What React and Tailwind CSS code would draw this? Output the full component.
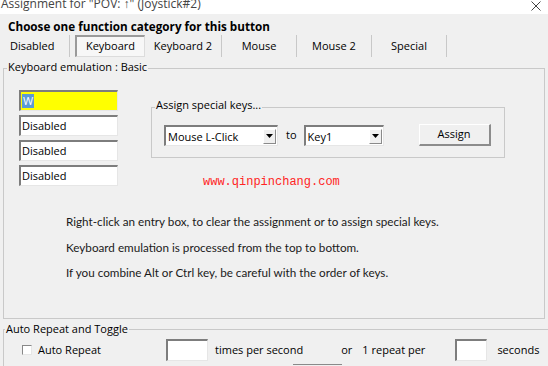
const sunken =
  "bg-white border-t-2 border-l-2 border-t-[#7d7d7d] border-l-[#7d7d7d] border-b border-r border-b-[#e6e6e6] border-r-[#e6e6e6]";

function Entry({ children, yellow }) {
  return (
    <div
      className={`w-[99px] h-[21px] flex items-center pl-[1px] ${sunken} ${
        yellow ? "!bg-[#ffff00]" : ""
      }`}
    >
      {children}
    </div>
  );
}

function Combo({ value, width }) {
  return (
    <div className={`${width} h-[21px] flex items-center ${sunken}`}>
      <span className="flex-1 pl-[2px] leading-none">{value}</span>
      <span className="w-[13px] h-[15px] mr-[1px] bg-[#f0f0f0] border-r border-b border-[#8a8a8a] border-t border-l border-t-white border-l-white flex items-center justify-center">
        <svg width="7" height="4" viewBox="0 0 7 4">
          <path d="M0 0h7L3.5 4z" fill="#000" />
        </svg>
      </span>
    </div>
  );
}

const tabs = ["Keyboard 2", "Mouse", "Mouse 2", "Special"];

export default function App() {
  return (
    <div className="w-[548px] h-[366px] overflow-hidden bg-[#f0f0f0] text-[11px] text-black font-['Open_Sans',sans-serif]">
      {/* title bar */}
      <div className="h-[14px] bg-white flex justify-between overflow-hidden">
        <span className="text-[12px] leading-[12px] text-[#444] -mt-[2px] pl-[1px]">
          Assignment for "POV: ↑" (Joystick#2)
        </span>
        <svg width="10" height="10" viewBox="0 0 10 10" className="mr-[7px] mt-[1px]">
          <path d="M0.5 0.5l9 9M9.5 0.5l-9 9" stroke="#444" strokeWidth="1" />
        </svg>
      </div>

      <div className="h-[21px] pl-[8px] pt-[2px] font-bold text-[11.7px] leading-[21px]">
        Choose one function category for this button
      </div>

      {/* tab row */}
      <div className="h-[22px] flex items-stretch">
        <div className="w-[70px] flex items-center pl-[10px] border-r border-[#c8c8c8]">Disabled</div>
        <div className="ml-[5px] w-[70px] flex items-center justify-center bg-[#f7f7f7] border-t-2 border-l-2 border-[#9a9a9a] border-r border-b border-r-[#dcdcdc] border-b-[#dcdcdc]">
          Keyboard
        </div>
        {tabs.map((t, i) => (
          <div
            key={t}
            className={`${i === 0 ? "w-[77px]" : "w-[75px]"} flex items-center justify-center border-r border-[#c8c8c8]`}
          >
            {t}
          </div>
        ))}
      </div>

      {/* main group */}
      <fieldset className="mt-[4px] mx-[3px] h-[258px] border border-[#c9c9c9]">
        <legend className="ml-[3px] px-[1px] leading-[15px] relative -top-[2px]">
          Keyboard emulation : Basic
        </legend>
        <div className="flex pl-[15px] pt-[14px]">
          <div className="flex flex-col gap-[4px]">
            <Entry yellow>
              <span className="bg-[#5b9bd5] text-white px-[1px] leading-[14px]">W</span>
            </Entry>
            <Entry>Disabled</Entry>
            <Entry>Disabled</Entry>
            <Entry>Disabled</Entry>
          </div>
          <div className="ml-[33px] flex flex-col">
            <fieldset className="mt-[10px] w-[354px] h-[58px] border border-[#c9c9c9]">
              <legend className="ml-[3px] px-[1px] leading-[15px] relative -top-[3px]">
                Assign special keys...
              </legend>
              <div className="flex items-center pl-[12px] pt-[10px]">
                <Combo value="Mouse L-Click" width="w-[114px]" />
                <span className="ml-[8px] mr-[7px]">to</span>
                <Combo value="Key1" width="w-[80px]" />
                <button className="ml-[35px] w-[72px] h-[22px] bg-[#f0f0f0] border-t border-l border-white border-r-2 border-b-2 border-r-[#8c8c8c] border-b-[#8c8c8c] -mt-[1px]">
                  Assign
                </button>
              </div>
            </fieldset>
            <div className="mt-[16px] ml-[52px] text-[12px] leading-[16px] text-[#ff2424] font-['Liberation_Mono',monospace]">
              www.qinpinchang.com
            </div>
          </div>
        </div>
        <div className="pl-[62px] pt-[19px] flex flex-col font-['Lato',sans-serif] text-[11.7px] leading-[25.5px] text-[#1a1a1a]">
          <span>Right-click an entry box, to clear the assignment or to assign special keys.</span>
          <span>Keyboard emulation is processed from the top to bottom.</span>
          <span>If you combine Alt or Ctrl key, be careful with the order of keys.</span>
        </div>
      </fieldset>

      {/* auto repeat group */}
      <fieldset className="mt-[3px] ml-[3px] -mr-[4px] h-[60px] border border-[#c9c9c9]">
        <legend className="ml-[1px] px-[1px] leading-[15px] relative -top-[1px]">
          Auto Repeat and Toggle
        </legend>
        <div className="flex items-center pt-[2px]">
          <span className={`ml-[18px] w-[10px] h-[10px] ${sunken} !border-t-[#888] !border-l-[#888] !border-t !border-l`}></span>
          <span className="ml-[6px]">Auto Repeat</span>
          <span className={`ml-[65px] w-[42px] h-[22px] ${sunken}`}></span>
          <span className="ml-[7px]">times per second</span>
          <span className="ml-[38px]">or</span>
          <span className="ml-[10px]">1 repeat per</span>
          <span className={`ml-[30px] w-[32px] h-[22px] ${sunken}`}></span>
          <span className="ml-[10px]">seconds</span>
        </div>
        <div className="ml-[289px] mt-[3px] w-[49px] h-[4px] border-t border-[#8a8a8a]"></div>
      </fieldset>
    </div>
  );
}
